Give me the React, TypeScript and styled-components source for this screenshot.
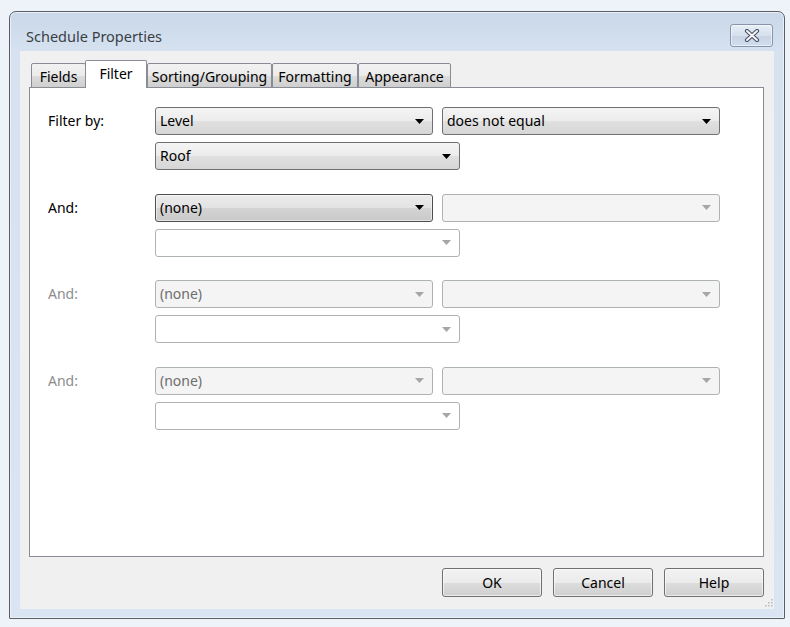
import * as React from 'react';
import styled, { createGlobalStyle, css } from 'styled-components';

const GlobalStyle = createGlobalStyle`
	html, body {
		margin: 0;
		padding: 0;
		background: #eef2f9;
	}
	body {
		font-family: 'Noto Sans', 'Open Sans', 'DejaVu Sans', sans-serif;
		font-size: 14px;
		color: #000;
	}
`;

const Page = styled.div`
	width: 790px;
	height: 627px;
	box-sizing: border-box;
	padding: 11px 0 0 9px;
`;

const Window = styled.div`
	width: 776px;
	height: 608px;
	box-sizing: border-box;
	border: 1px solid #5a5f66;
	border-radius: 7px 7px 1px 1px;
	background: linear-gradient(to bottom, #c9d7e8 0px, #d6e2f0 40px, #d9e5f3 100%);
	box-shadow: inset 0 0 0 1px #e9f0f8;
	display: flex;
	flex-direction: column;
`;

const TitleBar = styled.div`
	height: 39px;
	display: flex;
	align-items: flex-start;
	justify-content: space-between;
	padding: 0 11px 0 16px;
`;

const TitleText = styled.span`
	font-size: 14.5px;
	line-height: 20px;
	margin-top: 14px;
	color: #3a3f46;
`;

const CloseButton = styled.div`
	width: 43px;
	height: 23px;
	margin-top: 12px;
	box-sizing: border-box;
	border: 1px solid #8695a9;
	border-radius: 3px;
	background: linear-gradient(to bottom, #e6edf6 0%, #d6e1ee 50%, #c7d4e4 51%, #d2dded 100%);
	box-shadow: inset 0 0 0 1px rgba(255, 255, 255, 0.55);
	display: flex;
	align-items: center;
	justify-content: center;
`;

const Client = styled.div`
	position: relative;
	flex: 1;
	margin: 0 10px 9px 10px;
	background: #f0f0f0;
	display: flex;
	flex-direction: column;
	padding: 10px 10px 0 9px;
`;

const TabStrip = styled.div`
	display: flex;
	align-items: flex-end;
	height: 27px;
	padding-left: 2px;
	margin-bottom: -1px;
	position: relative;
	z-index: 1;
`;

const Tab = styled.div<{ $active?: boolean; $w: number }>`
	width: ${p => p.$w}px;
	box-sizing: border-box;
	border: 1px solid #898c95;
	border-radius: 2px 2px 0 0;
	display: flex;
	justify-content: center;
	white-space: nowrap;
	${p =>
		p.$active
			? css`
					height: 28px;
					margin-left: -1px;
					background: #fff;
					border-bottom: none;
					padding-top: 3px;
				`
			: css`
					height: 25px;
					background: linear-gradient(to bottom, #f2f2f2 0%, #ebebeb 50%, #dddddd 51%, #cfcfcf 100%);
					padding-top: 3px;
				`}
`;

const Panel = styled.div`
	height: 470px;
	box-sizing: border-box;
	border: 1px solid #898c95;
	background: #fff;
	padding: 19px 0 0 18px;
	display: flex;
	flex-direction: column;
	gap: 23.67px;
`;

const FilterGroup = styled.div`
	display: grid;
	grid-template-columns: 107px auto;
`;

const Label = styled.div<{ $disabled?: boolean }>`
	height: 28px;
	line-height: 28px;
	color: ${p => (p.$disabled ? '#8d8d8d' : '#000')};
`;

const ControlStack = styled.div`
	display: flex;
	flex-direction: column;
	gap: 7px;
`;

const ControlRow = styled.div`
	display: flex;
	gap: 9px;
`;

type ComboVariant = 'active' | 'focused' | 'disabled' | 'blank';

const comboLooks: Record<ComboVariant, ReturnType<typeof css>> = {
	active: css`
		border: 1px solid #707070;
		background: linear-gradient(to bottom, #f4f4f4 0%, #ececec 50%, #e0e0e0 51%, #d6d6d6 100%);
		color: #000;
	`,
	focused: css`
		border: 1px solid #4f4f4f;
		background: linear-gradient(to bottom, #ececec 0%, #e2e2e2 50%, #d4d4d4 51%, #c9c9c9 100%);
		box-shadow: inset 0 0 0 1px rgba(255, 255, 255, 0.5);
		color: #000;
	`,
	disabled: css`
		border: 1px solid #adb2b5;
		background: #f4f4f4;
		color: #6d6d6d;
	`,
	blank: css`
		border: 1px solid #adb2b5;
		background: #fff;
		color: #6d6d6d;
	`,
};

const Combo = styled.div<{ $variant: ComboVariant; $w: number }>`
	width: ${p => p.$w}px;
	height: 28px;
	box-sizing: border-box;
	border-radius: 3px;
	display: flex;
	align-items: center;
	justify-content: space-between;
	padding: 0 8px 0 4px;
	${p => comboLooks[p.$variant]}
`;

const ComboText = styled.span`
	white-space: nowrap;
	padding-bottom: 1px;
`;

const ButtonRow = styled.div`
	display: flex;
	justify-content: flex-end;
	gap: 11px;
	margin-top: 11px;
`;

const DialogButton = styled.div`
	width: 100px;
	height: 29px;
	box-sizing: border-box;
	border: 1px solid #707070;
	border-radius: 3px;
	background: linear-gradient(to bottom, #f2f2f2 0%, #ebebeb 50%, #dddddd 51%, #cfcfcf 100%);
	box-shadow: inset 0 0 0 1px rgba(255, 255, 255, 0.6);
	display: flex;
	align-items: center;
	justify-content: center;
	padding-bottom: 1px;
`;

const Grip = styled.svg`
	position: absolute;
	right: 1px;
	bottom: 2px;
`;

function Arrow({ disabled }: { disabled?: boolean }) {
	return (
		<svg width="9" height="5" viewBox="0 0 9 5">
			<path d="M0 0 H9 L4.5 5 Z" fill={disabled ? '#a6a6a6' : '#000'} />
		</svg>
	);
}

function Dropdown({ variant, width, text }: { variant: ComboVariant; width: number; text?: string }) {
	const dim = variant === 'disabled' || variant === 'blank';
	return (
		<Combo $variant={variant} $w={width}>
			<ComboText>{text}</ComboText>
			<Arrow disabled={dim} />
		</Combo>
	);
}

interface Condition {
	label: string;
	enabled: boolean;
	field: string;
	fieldVariant: ComboVariant;
	operator?: string;
	operatorVariant: ComboVariant;
	value?: string;
	valueVariant: ComboVariant;
}

const conditions: Condition[] = [
	{
		label: 'Filter by:',
		enabled: true,
		field: 'Level',
		fieldVariant: 'active',
		operator: 'does not equal',
		operatorVariant: 'active',
		value: 'Roof',
		valueVariant: 'active',
	},
	{ label: 'And:', enabled: true, field: '(none)', fieldVariant: 'focused', operatorVariant: 'disabled', valueVariant: 'blank' },
	{ label: 'And:', enabled: false, field: '(none)', fieldVariant: 'disabled', operatorVariant: 'disabled', valueVariant: 'blank' },
	{ label: 'And:', enabled: false, field: '(none)', fieldVariant: 'disabled', operatorVariant: 'disabled', valueVariant: 'blank' },
];

const tabs = [
	{ name: 'Fields', w: 55 },
	{ name: 'Filter', w: 62, active: true },
	{ name: 'Sorting/Grouping', w: 125 },
	{ name: 'Formatting', w: 86 },
	{ name: 'Appearance', w: 93 },
];

export default function App() {
	return (
		<>
			<GlobalStyle />
			<Page>
				<Window>
					<TitleBar>
						<TitleText>Schedule Properties</TitleText>
						<CloseButton>
							<svg width="16" height="13" viewBox="0 0 16 13">
								<path d="M3 2 L13 11 M13 2 L3 11" stroke="#4a5160" strokeWidth="4.2" strokeLinecap="round" />
								<path d="M3 2 L13 11 M13 2 L3 11" stroke="#f4f6f9" strokeWidth="2" strokeLinecap="round" />
							</svg>
						</CloseButton>
					</TitleBar>
					<Client>
						<TabStrip>
							{tabs.map(t => (
								<Tab key={t.name} $active={t.active} $w={t.w}>
									{t.name}
								</Tab>
							))}
						</TabStrip>
						<Panel>
							{conditions.map((c, i) => (
								<FilterGroup key={i}>
									<Label $disabled={!c.enabled}>{c.label}</Label>
									<ControlStack>
										<ControlRow>
											<Dropdown variant={c.fieldVariant} width={278} text={c.field} />
											<Dropdown variant={c.operatorVariant} width={278} text={c.operator} />
										</ControlRow>
										<Dropdown variant={c.valueVariant} width={305} text={c.value} />
									</ControlStack>
								</FilterGroup>
							))}
						</Panel>
						<ButtonRow>
							<DialogButton>OK</DialogButton>
							<DialogButton>Cancel</DialogButton>
							<DialogButton>Help</DialogButton>
						</ButtonRow>
						<Grip width="10" height="10" viewBox="0 0 10 10">
							{[
								[8, 2],
								[8, 5],
								[5, 5],
								[8, 8],
								[5, 8],
								[2, 8],
							].map(([x, y]) => (
								<rect key={`${x}-${y}`} x={x} y={y} width="1.5" height="1.5" fill="#b5b9c0" />
							))}
						</Grip>
					</Client>
				</Window>
			</Page>
		</>
	);
}
